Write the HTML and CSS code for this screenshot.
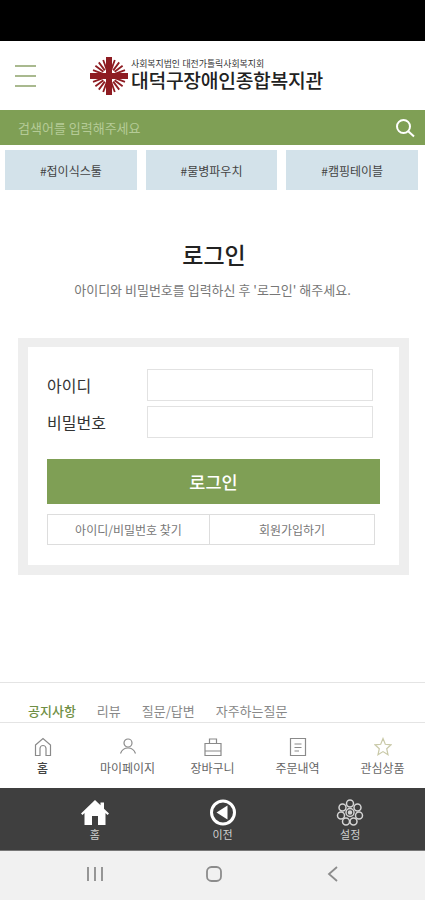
FILE: index.html
```html
<!DOCTYPE html>
<html>
<head>
  <title>로그인</title>
  <link rel="stylesheet" href="styles.css">
</head>
<body>
  <div class="status-bar"></div>

  <div class="header">
    <div class="menu-button"><span></span><span></span><span></span></div>
    <div class="logo">
      <svg class="logo-mark" width="38" height="38" viewBox="0 0 38 38">
        <defs>
          <path id="rays" fill="none" stroke="#8e1c22" stroke-width="1.800" d="M25.600 21.400L35 24.800M24.600 23.200L32.600 29.200M23.200 24.600L29.200 32.600M21.400 25.600L24.800 35"/>
        </defs>
        <use href="#rays"/>
        <use href="#rays" transform="rotate(90 19 19)"/>
        <use href="#rays" transform="rotate(180 19 19)"/>
        <use href="#rays" transform="rotate(270 19 19)"/>
        <path fill="#8e1c22" d="M16 0h6v16h16v6H22v16h-6V22H0v-6h16z"/>
      </svg>
      <div class="logo-text">
        <div class="logo-small">사회복지법인 대전가톨릭사회복지회</div>
        <div class="logo-big">대덕구장애인종합복지관</div>
      </div>
    </div>
  </div>

  <div class="search-bar">
    <span class="search-text">검색어를 입력해주세요</span>
    <svg width="20" height="20" viewBox="0 0 20 20" fill="none" stroke="#fff" stroke-width="2">
      <circle cx="8.500" cy="8.500" r="6.500"/>
      <path d="M13.500 13.500L19 18.500"/>
    </svg>
  </div>

  <div class="tags">
    <div class="tag">#접이식스툴</div>
    <div class="tag">#물병파우치</div>
    <div class="tag">#캠핑테이블</div>
  </div>

  <div class="login-title">
    <h1>로그인</h1>
    <p>아이디와 비밀번호를 입력하신 후 '로그인' 해주세요.</p>
  </div>

  <div class="login-box">
    <div class="login-inner">
      <div class="field">
        <label>아이디</label>
        <div class="input"></div>
      </div>
      <div class="field">
        <label>비밀번호</label>
        <div class="input"></div>
      </div>
      <button class="login-button">로그인</button>
      <div class="login-links">
        <div class="login-link">아이디/비밀번호 찾기</div>
        <div class="login-link">회원가입하기</div>
      </div>
    </div>
  </div>

  <div class="board-tabs">
    <span class="board-tab active">공지사항</span>
    <span class="board-tab">리뷰</span>
    <span class="board-tab">질문/답변</span>
    <span class="board-tab">자주하는질문</span>
  </div>

  <div class="shop-nav">
    <div class="shop-item">
      <svg width="18" height="20" viewBox="0 0 18 20" fill="none" stroke="#8a8a8a" stroke-width="1.200">
        <path d="M1.500 8L9 1.500L16.500 8V18.500H12V11.500A3 3 0 0 0 6 11.500V18.500H1.500z"/>
      </svg>
      <span class="shop-label dark">홈</span>
    </div>
    <div class="shop-item">
      <svg width="18" height="20" viewBox="0 0 18 20" fill="none" stroke="#8a8a8a" stroke-width="1.200">
        <circle cx="9" cy="6" r="4"/>
        <path d="M1.500 16.500C3 12.500 6 11 9 11S15 12.500 16.500 16.500"/>
      </svg>
      <span class="shop-label">마이페이지</span>
    </div>
    <div class="shop-item">
      <svg width="18" height="20" viewBox="0 0 18 20" fill="none" stroke="#8a8a8a" stroke-width="1.200">
        <path d="M1 6.500H17V18.500H1zM1 14H17M5.500 6.500V2H12.500V6.500"/>
      </svg>
      <span class="shop-label">장바구니</span>
    </div>
    <div class="shop-item">
      <svg width="18" height="20" viewBox="0 0 18 20" fill="none" stroke="#8a8a8a" stroke-width="1.200">
        <path d="M1.500 1.500H16.500V18.500H1.500zM5.500 7H12.500M5.500 10.500H12.500M5.500 14H10"/>
      </svg>
      <span class="shop-label">주문내역</span>
    </div>
    <div class="shop-item">
      <svg width="18" height="20" viewBox="0 0 18 20" fill="none" stroke="#c9c9a8" stroke-width="1.200">
        <path d="M9 1.500L11.300 7.300L17 7.800L12.700 11.700L14 17.800L9 14.600L4 17.800L5.300 11.700L1 7.800L6.700 7.300z"/>
      </svg>
      <span class="shop-label">관심상품</span>
    </div>
  </div>

  <div class="app-nav">
    <div class="app-item">
      <svg width="28" height="27" viewBox="0 0 28 27">
        <path fill="#fff" d="M14 1L19.500 6.300V3.500H23V9.700L28 14.500L26.500 16L24.500 14V26H17V17H11V26H3.500V14L1.500 16L0 14.500z"/>
      </svg>
      <span>홈</span>
    </div>
    <div class="app-item">
      <svg width="28" height="27" viewBox="0 0 28 27">
        <circle cx="14" cy="13.500" r="11.500" fill="none" stroke="#fff" stroke-width="3"/>
        <path fill="#fff" d="M7.500 13.500L18.500 6.500V20.500z"/>
      </svg>
      <span>이전</span>
    </div>
    <div class="app-item">
      <svg width="28" height="27" viewBox="0 0 28 27" fill="none" stroke="#d4d4d4" stroke-width="1.500">
        <circle cx="14" cy="13.500" r="4"/>
        <circle cx="14" cy="13.500" r="1.500" fill="#d4d4d4"/>
        <circle cx="14" cy="4.500" r="3.500"/>
        <circle cx="21.500" cy="8.500" r="3.500"/>
        <circle cx="23" cy="16.500" r="3.500"/>
        <circle cx="17.500" cy="22.500" r="3.500"/>
        <circle cx="10" cy="22.500" r="3.500"/>
        <circle cx="5" cy="16.500" r="3.500"/>
        <circle cx="6.500" cy="8.500" r="3.500"/>
      </svg>
      <span>설정</span>
    </div>
  </div>

  <div class="system-nav">
    <svg width="18" height="18" viewBox="0 0 18 18" stroke="#8c8c8c" stroke-width="1.800">
      <path d="M2 2V16M9 2V16M16 2V16"/>
    </svg>
    <svg width="18" height="18" viewBox="0 0 18 18" fill="none" stroke="#8c8c8c" stroke-width="1.800">
      <rect x="2" y="2" width="14" height="14" rx="4.500"/>
    </svg>
    <svg width="18" height="18" viewBox="0 0 18 18" fill="none" stroke="#8c8c8c" stroke-width="1.800">
      <path d="M13 2L5 9L13 16"/>
    </svg>
  </div>
</body>
</html>
```

FILE: styles.css
```css
* {
  box-sizing: border-box;
}

body {
  margin: 0;
  background-color: white;
  color: #333;
  font-family: "Noto Sans CJK KR", "Noto Sans", sans-serif;
}

.status-bar {
  height: 41px;
  background-color: black;
}

/* header */

.header {
  height: 69px;
  display: flex;
  align-items: center;
  padding-left: 15px;
}

.menu-button {
  width: 21px;
  height: 22px;
  display: flex;
  flex-direction: column;
  justify-content: space-between;
}

.menu-button span {
  height: 2px;
  background-color: #a9b98f;
}

.logo {
  display: flex;
  align-items: center;
  margin-left: 54px;
}

.logo-text {
  margin-left: 3px;
  padding-top: 1px;
  white-space: nowrap;
  font-family: "Liberation Sans", "Noto Sans CJK KR", sans-serif;
}

.logo-small {
  font-size: 8.900px;
  line-height: 11px;
  color: #333;
}

.logo-big {
  font-size: 19.300px;
  line-height: 23px;
  font-weight: 500;
  letter-spacing: -0.300px;
  color: #222;
}

.search-bar {
  height: 35px;
  background-color: #7f9f55;
  display: flex;
  align-items: center;
  justify-content: space-between;
  padding: 0 10px 0 18px;
}

.search-text {
  font-size: 13px;
  color: #b5cb97;
}

.tags {
  display: flex;
  gap: 9px;
  padding: 5px 7px 0 5px;
}

.tag {
  flex: 1;
  height: 40px;
  background-color: #d3e2ea;
  display: flex;
  align-items: center;
  justify-content: center;
  font-size: 12px;
  color: #444;
}

/* login */

.login-title {
  text-align: center;
  padding-top: 47px;
}

.login-title h1 {
  margin: 0;
  padding-left: 3px;
  font-size: 23px;
  line-height: 34px;
  font-weight: 500;
  color: #222;
}

.login-title p {
  margin: 10px 0 0;
  font-size: 13px;
  line-height: 18px;
  color: #777;
}

.login-box {
  margin: 39px 16px 0 18px;
  padding: 9px 10px 10px;
  background-color: #eeeeee;
}

.login-inner {
  background-color: white;
  padding: 22px 19px 20px;
  height: 218px;
}

.field {
  display: flex;
  align-items: center;
  height: 32px;
  margin-bottom: 5px;
}

.field label {
  width: 100px;
  font-size: 16px;
  color: #333;
}

.input {
  width: 226px;
  height: 32px;
  border: 1px solid #e2e2e2;
  background-color: white;
}

.login-button {
  display: block;
  width: 333px;
  height: 45px;
  margin-top: 21px;
  border: none;
  background-color: #7f9f55;
  color: white;
  font-family: inherit;
  font-size: 17.500px;
  font-weight: 500;
}

.login-links {
  display: flex;
  width: 328px;
  height: 31px;
  margin-top: 10px;
  border: 1px solid #dddddd;
}

.login-link {
  flex: 1;
  display: flex;
  align-items: center;
  justify-content: center;
  font-size: 12px;
  color: #777;
}

.login-link + .login-link {
  flex: 0 0 165px;
  border-left: 1px solid #dddddd;
}

/* bottom */

.board-tabs {
  margin-top: 107px;
  height: 41px;
  border-top: 1px solid #e4e4e4;
  border-bottom: 1px solid #e4e4e4;
  display: flex;
  align-items: flex-end;
  gap: 21px;
  padding: 0 0 2px 28px;
}

.board-tab {
  font-size: 13px;
  line-height: 19px;
  color: #888;
}

.board-tab.active {
  color: #6f8f45;
  font-weight: 500;
}

.shop-nav {
  height: 65px;
  display: flex;
  padding-top: 14px;
}

.shop-item {
  flex: 1;
  display: flex;
  flex-direction: column;
  align-items: center;
}

.shop-label {
  margin-top: 3px;
  font-size: 12px;
  line-height: 16px;
  color: #666;
}

.shop-label.dark {
  color: #444;
  font-weight: 500;
}

.app-nav {
  height: 63px;
  background-color: #3f3f3f;
  display: flex;
  padding: 11px 11px 0 31px;
  border-bottom: 1px solid #777;
}

.app-item {
  flex: 1;
  display: flex;
  flex-direction: column;
  align-items: center;
  font-size: 11px;
  line-height: 16px;
  color: #cfcfcf;
}

.system-nav {
  height: 49px;
  background-color: #f1f1f1;
  display: flex;
  align-items: center;
  justify-content: space-between;
  padding: 0 83px 3px 86px;
}
```
